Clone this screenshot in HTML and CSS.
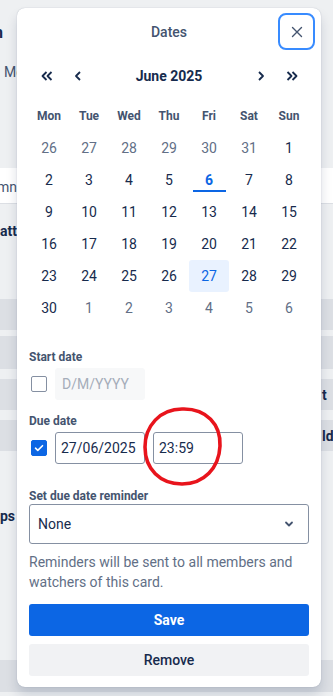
FILE: index.html
```html
<!DOCTYPE html>
<html lang="en">

<head>
    <meta charset="UTF-8">
    <meta name="viewport" content="width=device-width, initial-scale=1.0">
    <title>Dates</title>
    <link rel="stylesheet" href="styles.css">
</head>

<body>
    <div class="page">
        <div class="bgRow titleRow">
            <div class="edgeLeft alignEnd padEnd14"><span>Automation</span></div>
        </div>
        <div class="bgRow membersRow">
            <div class="edgeLeft padStart4"><span>Members</span></div>
        </div>
        <div class="bgRow stripRow">
            <div class="edgeLeft alignEnd"><span>Add column</span></div>
            <div class="edgeRight"></div>
        </div>
        <div class="bgRow attRow">
            <div class="edgeLeft"><span class="strong">attachments</span></div>
        </div>
        <div class="bgRow band bandFirst"></div>
        <div class="bgRow band bandGap6"></div>
        <div class="bgRow band">
            <div class="edgeLeft"></div>
            <div class="edgeRight"><span class="strong">t</span></div>
        </div>
        <div class="bgRow band">
            <div class="edgeLeft"></div>
            <div class="edgeRight"><span class="strong">ld</span></div>
        </div>
        <div class="bgRow psRow">
            <div class="edgeLeft alignEnd padEnd2"><span class="strong">Groups</span></div>
        </div>
        <div class="bgRow bottomBand"></div>
    </div>

    <div class="popover">
        <div class="popHeader">
            <span></span>
            <h2 class="popTitle">Dates</h2>
            <button class="closeBtn" aria-label="Close">
                <svg width="16" height="16" viewBox="0 0 16 16">
                    <path d="M3.5 3.5l9 9M12.5 3.5l-9 9" stroke="#44546f" stroke-width="1.4" stroke-linecap="round" fill="none" />
                </svg>
            </button>
        </div>

        <div class="calendar">
            <div class="calNav">
                <button class="navBtn" aria-label="Previous year">
                    <svg width="16" height="16" viewBox="0 0 16 16">
                        <path d="M7.5 4l-4 4 4 4M12.5 4l-4 4 4 4" stroke="#172b4d" stroke-width="1.8" fill="none" stroke-linejoin="round" />
                    </svg>
                </button>
                <button class="navBtn" aria-label="Previous month">
                    <svg width="16" height="16" viewBox="0 0 16 16">
                        <path d="M10 4l-4 4 4 4" stroke="#172b4d" stroke-width="1.8" fill="none" stroke-linejoin="round" />
                    </svg>
                </button>
                <div class="calMonth">June 2025</div>
                <button class="navBtn" aria-label="Next month">
                    <svg width="16" height="16" viewBox="0 0 16 16">
                        <path d="M6 4l4 4-4 4" stroke="#172b4d" stroke-width="1.8" fill="none" stroke-linejoin="round" />
                    </svg>
                </button>
                <button class="navBtn" aria-label="Next year">
                    <svg width="16" height="16" viewBox="0 0 16 16">
                        <path d="M3.5 4l4 4-4 4M8.5 4l4 4-4 4" stroke="#172b4d" stroke-width="1.8" fill="none" stroke-linejoin="round" />
                    </svg>
                </button>
            </div>

            <div class="calGrid" id="calGrid">
                <div class="weekday">Mon</div>
                <div class="weekday">Tue</div>
                <div class="weekday">Wed</div>
                <div class="weekday">Thu</div>
                <div class="weekday">Fri</div>
                <div class="weekday">Sat</div>
                <div class="weekday">Sun</div>

                <div class="day other">26</div><div class="day other">27</div><div class="day other">28</div><div class="day other">29</div><div class="day other">30</div><div class="day other">31</div><div class="day">1</div>
                <div class="day">2</div><div class="day">3</div><div class="day">4</div><div class="day">5</div><div class="day today">6</div><div class="day">7</div><div class="day">8</div>
                <div class="day">9</div><div class="day">10</div><div class="day">11</div><div class="day">12</div><div class="day">13</div><div class="day">14</div><div class="day">15</div>
                <div class="day">16</div><div class="day">17</div><div class="day">18</div><div class="day">19</div><div class="day">20</div><div class="day">21</div><div class="day">22</div>
                <div class="day">23</div><div class="day">24</div><div class="day">25</div><div class="day">26</div><div class="day selected">27</div><div class="day">28</div><div class="day">29</div>
                <div class="day">30</div><div class="day other">1</div><div class="day other">2</div><div class="day other">3</div><div class="day other">4</div><div class="day other">5</div><div class="day other">6</div>
            </div>
        </div>

        <div class="dateForm">
            <div class="fieldLabel startLabel">Start date</div>
            <div class="dateRow">
                <span class="checkBox"></span>
                <div class="textBox disabled">D/M/YYYY</div>
            </div>

            <div class="fieldLabel dueLabel">Due date</div>
            <div class="dateRow">
                <span class="checkBox checked">
                    <svg width="16" height="16" viewBox="0 0 16 16">
                        <path d="M4.5 8.2l2.3 2.2 4.7-4.7" stroke="#fff" stroke-width="1.6" fill="none" stroke-linecap="round" stroke-linejoin="round" />
                    </svg>
                </span>
                <div class="textBox">27/06/2025</div>
                <div class="textBox">23:59</div>
            </div>

            <div class="fieldLabel reminderLabel">Set due date reminder</div>
            <div class="selectBox">
                <span>None</span>
                <svg width="16" height="16" viewBox="0 0 16 16">
                    <path d="M5 6.5l3 3 3-3" stroke="#44546f" stroke-width="1.8" fill="none" stroke-linecap="round" stroke-linejoin="round" />
                </svg>
            </div>
            <p class="helpText">Reminders will be sent to all members and watchers of this card.</p>

            <button class="saveBtn">Save</button>
            <button class="removeBtn">Remove</button>
        </div>
    </div>

    <svg class="markCircle" width="86" height="82" viewBox="0 0 86 82">
        <path d="M44 3 C66 3 81 18 80 40 C79 62 64 78 42 78 C20 78 5 63 5 41 C5 20 20 3 42 3 Z" stroke="#e8141c" stroke-width="3.6" fill="none" />
    </svg>
</body>

</html>
```

FILE: styles.css
```css
* {
    margin: 0;
    padding: 0;
    box-sizing: border-box;
}

body {
    width: 333px;
    height: 696px;
    overflow: hidden;
    background-color: #eef0f2;
    font-family: Roboto, "Noto Sans", sans-serif;
    font-size: 14px;
    color: #172b4d;
    position: relative;
}

button {
    font-family: inherit;
    border: none;
    background: none;
    cursor: pointer;
}

/* page behind the popover */
.page {
    display: flex;
    flex-direction: column;
}

.bgRow {
    display: flex;
    justify-content: space-between;
    align-items: center;
    white-space: nowrap;
}

.edgeLeft {
    width: 17px;
    overflow: hidden;
    display: flex;
}

.edgeRight {
    width: 12px;
    overflow: hidden;
    display: flex;
    padding-left: 1px;
}

.alignEnd {
    justify-content: flex-end;
}

.padEnd14 {
    padding-right: 14px;
}

.padEnd2 {
    padding-right: 2px;
}

.padStart4 {
    padding-left: 4px;
}

.strong {
    font-weight: 700;
}

.titleRow {
    margin-top: 20px;
    height: 24px;
    font-size: 16px;
    font-weight: 700;
}

.membersRow {
    margin-top: 16px;
    height: 24px;
    color: #44546f;
}

.stripRow {
    margin-top: 84px;
    height: 36px;
    background-color: #fff;
    border-bottom: 1px solid #dcdfe4;
    color: #44546f;
    padding-top: 2px;
}

.attRow {
    margin-top: 16px;
    height: 22px;
}

.band {
    height: 31px;
    background-color: #dcdfe4;
    margin-top: 10px;
}

.bandFirst {
    margin-top: 57px;
}

.bandGap6 {
    margin-top: 6px;
    height: 33px;
}

.psRow {
    margin-top: 54px;
    height: 22px;
}

.bottomBand {
    margin-top: 133px;
    height: 32px;
    background-color: #dcdfe4;
}

/* popover */
.popover {
    position: absolute;
    left: 17px;
    top: 8px;
    width: 304px;
    background-color: #fff;
    border-radius: 8px;
    box-shadow: 0 8px 12px rgba(9, 30, 66, 0.15), 0 0 1px rgba(9, 30, 66, 0.31);
    padding: 5px 0 11px;
}

.popHeader {
    display: grid;
    grid-template-columns: 37px 1fr 37px;
    align-items: center;
    padding: 0 6px;
    height: 37px;
}

.popTitle {
    text-align: center;
    font-size: 14px;
    font-weight: 500;
    color: #44546f;
    line-height: 20px;
}

.closeBtn {
    width: 37px;
    height: 37px;
    border: 2px solid #388bff;
    border-radius: 8px;
    display: flex;
    align-items: center;
    justify-content: center;
}

.calendar {
    padding: 0 12px;
    margin-top: 10px;
}

.calNav {
    display: flex;
    align-items: center;
    height: 32px;
    padding: 0 2px;
}

.navBtn {
    width: 31px;
    height: 32px;
    display: flex;
    align-items: center;
    justify-content: center;
}

.calMonth {
    flex: 1;
    text-align: center;
    font-weight: 700;
    font-size: 14px;
}

.calGrid {
    display: grid;
    grid-template-columns: repeat(7, 40px);
    grid-auto-rows: 32px;
    margin-top: 8px;
}

.weekday {
    display: flex;
    align-items: center;
    justify-content: center;
    font-size: 12px;
    font-weight: 700;
    color: #44546f;
}

.day {
    display: flex;
    align-items: center;
    justify-content: center;
    border-radius: 3px;
    position: relative;
}

.day.other {
    color: #626f86;
}

.day.today {
    color: #0c66e4;
    font-weight: 700;
}

.day.today::after {
    content: "";
    position: absolute;
    left: 4px;
    right: 3px;
    bottom: 4px;
    height: 2px;
    background-color: #0c66e4;
}

.day.selected {
    background-color: #e9f2ff;
    color: #0c66e4;
}

/* form */
.dateForm {
    padding: 0 12px;
}

.fieldLabel {
    font-size: 12px;
    font-weight: 700;
    color: #44546f;
    line-height: 16px;
}

.startLabel {
    margin-top: 25px;
}

.dueLabel {
    margin-top: 13px;
}

.reminderLabel {
    margin-top: 24px;
}

.dateRow {
    display: flex;
    align-items: center;
    gap: 8px;
    margin-top: 3px;
    height: 32px;
}

.checkBox {
    width: 16px;
    height: 16px;
    margin-left: 2px;
    border: 1.5px solid #8590a2;
    border-radius: 2px;
    display: flex;
    flex-shrink: 0;
}

.checkBox.checked {
    background-color: #0c66e4;
    border-color: #0c66e4;
    align-items: center;
    justify-content: center;
}

.checkBox.checked svg {
    margin: -1.5px;
}

.textBox {
    width: 90px;
    height: 32px;
    border: 1px solid #8590a2;
    border-radius: 3px;
    padding: 0 5px;
    display: flex;
    align-items: center;
    color: #172b4d;
}

.textBox.disabled {
    background-color: #f7f8f9;
    border-color: #f7f8f9;
    color: #a5adba;
    padding-left: 6px;
}

.selectBox {
    height: 40px;
    border: 1px solid #8590a2;
    border-radius: 3px;
    display: flex;
    align-items: center;
    justify-content: space-between;
    padding: 0 11px 0 8px;
}

.helpText {
    margin-top: 8px;
    line-height: 20px;
    color: #626f86;
}

.saveBtn,
.removeBtn {
    display: block;
    width: 100%;
    height: 32px;
    border-radius: 3px;
    font-size: 14px;
}

.saveBtn {
    margin-top: 12px;
    background-color: #0c66e4;
    color: #fff;
    font-weight: 700;
}

.removeBtn {
    margin-top: 8px;
    background-color: #f1f2f4;
    color: #172b4d;
    font-weight: 500;
}

.markCircle {
    position: absolute;
    left: 140px;
    top: 406px;
}
```
